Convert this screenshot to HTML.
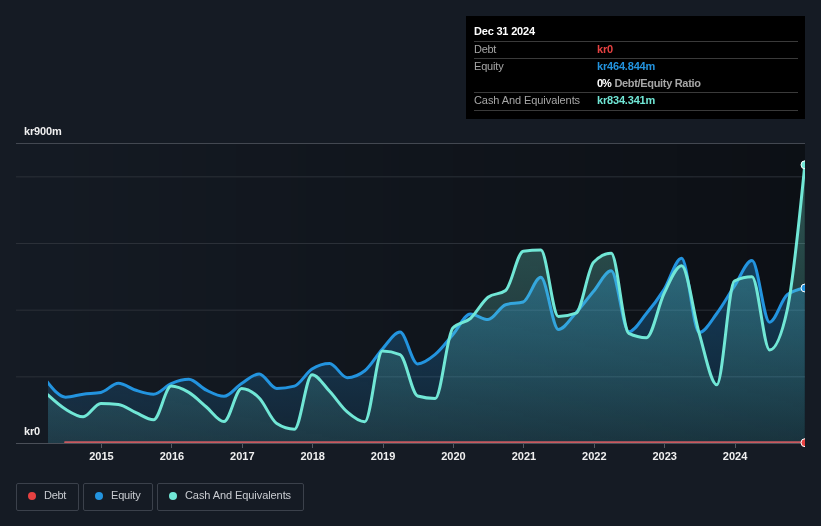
<!DOCTYPE html>
<html><head><meta charset="utf-8"><title>chart</title>
<style>
html,body{margin:0;padding:0;background:#151b24;}
body{width:821px;height:526px;overflow:hidden;position:relative;font-family:"Liberation Sans",sans-serif;}
svg{position:absolute;left:0;top:0;}
svg text{font-family:"Liberation Sans",sans-serif;}
.tt{position:absolute;left:466px;top:16px;width:339px;height:102.5px;background:#000;}
.tt div{position:absolute;white-space:nowrap;font-size:11px;line-height:13px;}
.tt .ln{left:8px;width:324px;height:1px;background:#3a3a3a;}
.lab{left:8px;color:#a6a6a6;letter-spacing:-0.08px;}
.val{left:131px;font-weight:bold;letter-spacing:-0.185px;}
.lg{position:absolute;top:483px;height:27.5px;border:1px solid #3b414b;border-radius:2px;box-sizing:border-box;}
.lg i{position:absolute;top:7.5px;width:8px;height:8px;border-radius:50%;}
.lg span{position:absolute;top:5px;font-size:11px;line-height:13px;color:#c9ccd1;white-space:nowrap;}
#w{position:absolute;left:0;top:0;width:821px;height:526px;will-change:transform;}
</style></head><body><div id="w">
<svg width="821" height="526" viewBox="0 0 821 526">
<defs>
<linearGradient id="pg" x1="16" y1="0" x2="805" y2="0" gradientUnits="userSpaceOnUse"><stop offset="0" stop-color="#000" stop-opacity="0"/><stop offset="1" stop-color="#000" stop-opacity="0.40"/></linearGradient>
<linearGradient id="ge" x1="0" y1="258" x2="0" y2="443" gradientUnits="userSpaceOnUse"><stop offset="0" stop-color="#2394df" stop-opacity="0.36"/><stop offset="1" stop-color="#2394df" stop-opacity="0.11"/></linearGradient>
<linearGradient id="gc" x1="0" y1="143" x2="0" y2="443" gradientUnits="userSpaceOnUse"><stop offset="0" stop-color="#71e7d6" stop-opacity="0.35"/><stop offset="1" stop-color="#71e7d6" stop-opacity="0.1"/></linearGradient>
<clipPath id="cp"><rect x="16" y="130" width="789" height="320"/></clipPath><clipPath id="cl"><rect x="48" y="130" width="757" height="320"/></clipPath>
</defs>
<rect x="16" y="143" width="789" height="300" fill="url(#pg)"/>
<g stroke="#2b3038" stroke-width="1">
<line x1="16" y1="176.83" x2="805" y2="176.83"/><line x1="16" y1="243.5" x2="805" y2="243.5"/><line x1="16" y1="310.17" x2="805" y2="310.17"/><line x1="16" y1="376.83" x2="805" y2="376.83"/>
</g>
<line x1="16" y1="143.5" x2="805" y2="143.5" stroke="#434851" stroke-width="1" shape-rendering="crispEdges"/>
<g clip-path="url(#cp)">
<line x1="16" y1="443.5" x2="805" y2="443.5" stroke="#4a4f58" stroke-width="1" shape-rendering="crispEdges"/>
<path d="M65,442.2L805,442.2" fill="none" stroke="#e64141" stroke-width="1.7" stroke-linecap="round"/>
<path d="M48,443L45.00,379.12 L48.00,382.80C53.87,390.00,59.73,397.20,65.60,397.20C71.47,397.20,77.33,394.98,83.20,394.20C89.07,393.42,94.93,393.63,100.80,392.50C106.67,391.37,112.53,383.20,118.40,383.20C124.27,383.20,130.13,388.47,136.00,390.30C141.87,392.13,147.73,394.20,153.60,394.20C159.47,394.20,165.33,386.08,171.20,383.60C177.07,381.12,182.93,379.30,188.80,379.30C194.67,379.30,200.53,387.37,206.40,390.20C212.27,393.03,218.13,396.30,224.00,396.30C229.87,396.30,235.73,387.13,241.60,383.40C247.47,379.67,253.33,373.90,259.20,373.90C265.07,373.90,270.93,388.50,276.80,388.50C282.67,388.50,288.53,387.70,294.40,386.10C300.27,384.50,306.13,372.77,312.00,369.10C317.87,365.43,323.73,363.60,329.60,363.60C335.47,363.60,341.33,377.70,347.20,377.70C353.07,377.70,358.93,375.40,364.80,370.80C370.67,366.20,376.53,355.45,382.40,349.00C388.27,342.55,394.13,332.10,400.00,332.10C405.87,332.10,411.73,363.90,417.60,363.90C423.47,363.90,429.33,359.27,435.20,354.40C441.07,349.53,446.93,341.43,452.80,334.70C458.67,327.97,464.53,314.00,470.40,314.00C476.27,314.00,482.13,319.60,488.00,319.60C493.87,319.60,499.73,306.50,505.60,304.70C511.47,302.90,517.33,303.80,523.20,302.00C529.07,300.20,534.93,277.30,540.80,277.30C546.67,277.30,552.53,329.50,558.40,329.50C564.27,329.50,570.13,319.07,576.00,312.70C581.87,306.33,587.73,298.28,593.60,291.30C599.47,284.32,605.33,270.80,611.20,270.80C617.07,270.80,622.93,331.70,628.80,331.70C634.67,331.70,640.53,320.52,646.40,313.50C652.27,306.48,658.13,298.80,664.00,289.60C669.87,280.40,675.73,258.30,681.60,258.30C687.47,258.30,693.33,332.50,699.20,332.50C705.07,332.50,710.93,321.22,716.80,313.50C722.67,305.78,728.53,295.03,734.40,286.20C740.27,277.37,746.13,260.50,752.00,260.50C757.87,260.50,763.73,322.20,769.60,322.20C775.47,322.20,781.33,299.33,787.20,294.80C793.07,290.27,798.93,289.13,804.80,288.00L804.80,443L48.00,443Z" fill="url(#ge)" clip-path="url(#cl)"/>
<path d="M45.00,379.12 L48.00,382.80C53.87,390.00,59.73,397.20,65.60,397.20C71.47,397.20,77.33,394.98,83.20,394.20C89.07,393.42,94.93,393.63,100.80,392.50C106.67,391.37,112.53,383.20,118.40,383.20C124.27,383.20,130.13,388.47,136.00,390.30C141.87,392.13,147.73,394.20,153.60,394.20C159.47,394.20,165.33,386.08,171.20,383.60C177.07,381.12,182.93,379.30,188.80,379.30C194.67,379.30,200.53,387.37,206.40,390.20C212.27,393.03,218.13,396.30,224.00,396.30C229.87,396.30,235.73,387.13,241.60,383.40C247.47,379.67,253.33,373.90,259.20,373.90C265.07,373.90,270.93,388.50,276.80,388.50C282.67,388.50,288.53,387.70,294.40,386.10C300.27,384.50,306.13,372.77,312.00,369.10C317.87,365.43,323.73,363.60,329.60,363.60C335.47,363.60,341.33,377.70,347.20,377.70C353.07,377.70,358.93,375.40,364.80,370.80C370.67,366.20,376.53,355.45,382.40,349.00C388.27,342.55,394.13,332.10,400.00,332.10C405.87,332.10,411.73,363.90,417.60,363.90C423.47,363.90,429.33,359.27,435.20,354.40C441.07,349.53,446.93,341.43,452.80,334.70C458.67,327.97,464.53,314.00,470.40,314.00C476.27,314.00,482.13,319.60,488.00,319.60C493.87,319.60,499.73,306.50,505.60,304.70C511.47,302.90,517.33,303.80,523.20,302.00C529.07,300.20,534.93,277.30,540.80,277.30C546.67,277.30,552.53,329.50,558.40,329.50C564.27,329.50,570.13,319.07,576.00,312.70C581.87,306.33,587.73,298.28,593.60,291.30C599.47,284.32,605.33,270.80,611.20,270.80C617.07,270.80,622.93,331.70,628.80,331.70C634.67,331.70,640.53,320.52,646.40,313.50C652.27,306.48,658.13,298.80,664.00,289.60C669.87,280.40,675.73,258.30,681.60,258.30C687.47,258.30,693.33,332.50,699.20,332.50C705.07,332.50,710.93,321.22,716.80,313.50C722.67,305.78,728.53,295.03,734.40,286.20C740.27,277.37,746.13,260.50,752.00,260.50C757.87,260.50,763.73,322.20,769.60,322.20C775.47,322.20,781.33,299.33,787.20,294.80C793.07,290.27,798.93,289.13,804.80,288.00" clip-path="url(#cl)" fill="none" stroke="#2394df" stroke-width="3" stroke-linejoin="round" stroke-linecap="butt"/>
<path d="M48,443L45.00,392.27 L48.00,395.00C53.87,400.33,59.73,405.67,65.60,409.30C71.47,412.93,77.33,416.80,83.20,416.80C89.07,416.80,94.93,403.40,100.80,403.40C106.67,403.40,112.53,403.73,118.40,404.40C124.27,405.07,130.13,410.13,136.00,412.70C141.87,415.27,147.73,419.80,153.60,419.80C159.47,419.80,165.33,386.10,171.20,386.10C177.07,386.10,182.93,388.92,188.80,392.40C194.67,395.88,200.53,402.13,206.40,407.00C212.27,411.87,218.13,421.60,224.00,421.60C229.87,421.60,235.73,388.50,241.60,388.50C247.47,388.50,253.33,392.15,259.20,398.00C265.07,403.85,270.93,419.80,276.80,423.60C282.67,427.40,288.53,429.30,294.40,429.30C300.27,429.30,306.13,374.70,312.00,374.70C317.87,374.70,323.73,385.10,329.60,391.30C335.47,397.50,341.33,406.82,347.20,411.90C353.07,416.98,358.93,421.80,364.80,421.80C370.67,421.80,376.53,351.00,382.40,351.00C388.27,351.00,394.13,352.20,400.00,354.60C405.87,357.00,411.73,394.33,417.60,396.00C423.47,397.67,429.33,398.50,435.20,398.50C441.07,398.50,446.93,334.33,452.80,328.00C458.67,321.67,464.53,323.62,470.40,318.50C476.27,313.38,482.13,301.83,488.00,297.30C493.87,292.77,499.73,295.03,505.60,290.50C511.47,285.97,517.33,251.93,523.20,251.20C529.07,250.47,534.93,250.10,540.80,250.10C546.67,250.10,552.53,316.50,558.40,316.50C564.27,316.50,570.13,315.40,576.00,313.20C581.87,311.00,587.73,268.13,593.60,262.20C599.47,256.27,605.33,253.30,611.20,253.30C617.07,253.30,622.93,330.53,628.80,333.40C634.67,336.27,640.53,337.70,646.40,337.70C652.27,337.70,658.13,305.70,664.00,293.70C669.87,281.70,675.73,265.70,681.60,265.70C687.47,265.70,693.33,313.57,699.20,333.40C705.07,353.23,710.93,384.70,716.80,384.70C722.67,384.70,728.53,283.87,734.40,281.00C740.27,278.13,746.13,276.70,752.00,276.70C757.87,276.70,763.73,350.00,769.60,350.00C775.47,350.00,781.33,336.67,787.20,310.00C793.07,283.33,798.93,224.17,804.80,165.00L804.80,443L48.00,443Z" fill="url(#gc)" clip-path="url(#cl)"/>
<path d="M45.00,392.27 L48.00,395.00C53.87,400.33,59.73,405.67,65.60,409.30C71.47,412.93,77.33,416.80,83.20,416.80C89.07,416.80,94.93,403.40,100.80,403.40C106.67,403.40,112.53,403.73,118.40,404.40C124.27,405.07,130.13,410.13,136.00,412.70C141.87,415.27,147.73,419.80,153.60,419.80C159.47,419.80,165.33,386.10,171.20,386.10C177.07,386.10,182.93,388.92,188.80,392.40C194.67,395.88,200.53,402.13,206.40,407.00C212.27,411.87,218.13,421.60,224.00,421.60C229.87,421.60,235.73,388.50,241.60,388.50C247.47,388.50,253.33,392.15,259.20,398.00C265.07,403.85,270.93,419.80,276.80,423.60C282.67,427.40,288.53,429.30,294.40,429.30C300.27,429.30,306.13,374.70,312.00,374.70C317.87,374.70,323.73,385.10,329.60,391.30C335.47,397.50,341.33,406.82,347.20,411.90C353.07,416.98,358.93,421.80,364.80,421.80C370.67,421.80,376.53,351.00,382.40,351.00C388.27,351.00,394.13,352.20,400.00,354.60C405.87,357.00,411.73,394.33,417.60,396.00C423.47,397.67,429.33,398.50,435.20,398.50C441.07,398.50,446.93,334.33,452.80,328.00C458.67,321.67,464.53,323.62,470.40,318.50C476.27,313.38,482.13,301.83,488.00,297.30C493.87,292.77,499.73,295.03,505.60,290.50C511.47,285.97,517.33,251.93,523.20,251.20C529.07,250.47,534.93,250.10,540.80,250.10C546.67,250.10,552.53,316.50,558.40,316.50C564.27,316.50,570.13,315.40,576.00,313.20C581.87,311.00,587.73,268.13,593.60,262.20C599.47,256.27,605.33,253.30,611.20,253.30C617.07,253.30,622.93,330.53,628.80,333.40C634.67,336.27,640.53,337.70,646.40,337.70C652.27,337.70,658.13,305.70,664.00,293.70C669.87,281.70,675.73,265.70,681.60,265.70C687.47,265.70,693.33,313.57,699.20,333.40C705.07,353.23,710.93,384.70,716.80,384.70C722.67,384.70,728.53,283.87,734.40,281.00C740.27,278.13,746.13,276.70,752.00,276.70C757.87,276.70,763.73,350.00,769.60,350.00C775.47,350.00,781.33,336.67,787.20,310.00C793.07,283.33,798.93,224.17,804.80,165.00" clip-path="url(#cl)" fill="none" stroke="#71e7d6" stroke-width="3" stroke-linejoin="round" stroke-linecap="butt"/>
<circle cx="805" cy="442.7" r="4" fill="#e64141" stroke="#fff" stroke-width="1"/>
<circle cx="805" cy="288" r="4" fill="#2394df" stroke="#fff" stroke-width="1"/>
<circle cx="805" cy="164.8" r="4" fill="#71e7d6" stroke="#fff" stroke-width="1"/>
</g>
<line x1="101.5" y1="444" x2="101.5" y2="448" stroke="#555a63" stroke-width="1" shape-rendering="crispEdges"/><line x1="171.9" y1="444" x2="171.9" y2="448" stroke="#555a63" stroke-width="1" shape-rendering="crispEdges"/><line x1="242.3" y1="444" x2="242.3" y2="448" stroke="#555a63" stroke-width="1" shape-rendering="crispEdges"/><line x1="312.7" y1="444" x2="312.7" y2="448" stroke="#555a63" stroke-width="1" shape-rendering="crispEdges"/><line x1="383.1" y1="444" x2="383.1" y2="448" stroke="#555a63" stroke-width="1" shape-rendering="crispEdges"/><line x1="453.5" y1="444" x2="453.5" y2="448" stroke="#555a63" stroke-width="1" shape-rendering="crispEdges"/><line x1="523.9" y1="444" x2="523.9" y2="448" stroke="#555a63" stroke-width="1" shape-rendering="crispEdges"/><line x1="594.3" y1="444" x2="594.3" y2="448" stroke="#555a63" stroke-width="1" shape-rendering="crispEdges"/><line x1="664.7" y1="444" x2="664.7" y2="448" stroke="#555a63" stroke-width="1" shape-rendering="crispEdges"/><line x1="735.1" y1="444" x2="735.1" y2="448" stroke="#555a63" stroke-width="1" shape-rendering="crispEdges"/>
<g font-size="11" font-weight="bold" fill="#f0f0f0"><text x="101.5" y="459.6" text-anchor="middle">2015</text><text x="171.9" y="459.6" text-anchor="middle">2016</text><text x="242.3" y="459.6" text-anchor="middle">2017</text><text x="312.7" y="459.6" text-anchor="middle">2018</text><text x="383.1" y="459.6" text-anchor="middle">2019</text><text x="453.5" y="459.6" text-anchor="middle">2020</text><text x="523.9" y="459.6" text-anchor="middle">2021</text><text x="594.3" y="459.6" text-anchor="middle">2022</text><text x="664.7" y="459.6" text-anchor="middle">2023</text><text x="735.1" y="459.6" text-anchor="middle">2024</text>
<text x="24" y="135" letter-spacing="-0.15">kr900m</text><text x="24" y="435" letter-spacing="-0.2">kr0</text></g>
</svg>
<div class="tt">
<div style="left:8px;top:9px;color:#fff;font-weight:bold;letter-spacing:-0.2px">Dec 31 2024</div>
<div class="ln" style="top:25px"></div>
<div class="lab" style="top:27px;letter-spacing:-0.3px">Debt</div><div class="val" style="top:27px;color:#e64141">kr0</div>
<div class="ln" style="top:42px"></div>
<div class="lab" style="top:44px;letter-spacing:-0.18px">Equity</div><div class="val" style="top:44px;color:#2394df">kr464.844m</div>
<div class="val" style="top:61px;color:#fff;letter-spacing:-1.2px">0%</div><div class="val" style="top:61px;left:148.4px;color:#a6a6a6;letter-spacing:-0.32px">Debt/Equity Ratio</div>
<div class="ln" style="top:76px"></div>
<div class="lab" style="top:78px">Cash And Equivalents</div><div class="val" style="top:78px;color:#71e7d6">kr834.341m</div>
<div class="ln" style="top:94px"></div>
</div>
<div class="lg" style="left:16px;width:63px"><i style="left:11px;background:#e64141"></i><span style="left:27px;letter-spacing:-0.3px">Debt</span></div>
<div class="lg" style="left:83px;width:70px"><i style="left:11px;background:#2394df"></i><span style="left:27px;letter-spacing:-0.18px">Equity</span></div>
<div class="lg" style="left:157px;width:147px"><i style="left:11px;background:#71e7d6"></i><span style="left:27px;letter-spacing:-0.08px">Cash And Equivalents</span></div>
</div></body></html>
